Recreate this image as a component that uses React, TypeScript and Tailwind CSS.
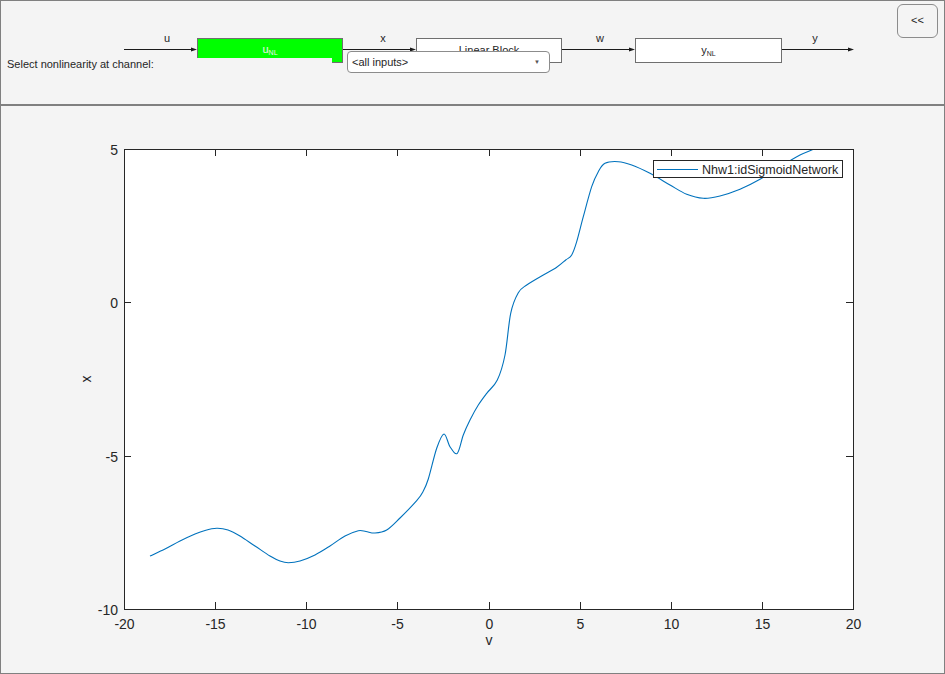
import React from 'react';

// page-coordinate samples of the nonlinearity curve (v -> x)
const curve: [number, number][] = [
    [150, 556], [165, 549], [180, 541], [195, 534], [205, 530.5], [216.7, 528.3], [228, 530],
    [240, 536], [255, 546], [270, 556], [280, 561], [288.3, 562.7], [300, 561], [315, 555],
    [330, 546], [345, 536], [358.3, 530.7], [366, 531.5], [375, 533], [386.7, 530], [400, 518],
    [416.7, 500.7], [423, 491.7], [428.3, 479], [436.7, 448.3], [444, 434], [450, 446.7],
    [457.3, 453.3], [463.3, 435], [470, 420], [478.3, 405], [486.7, 393.3], [497.3, 380],
    [505, 355], [510.7, 313.3], [518.3, 292.7], [526.7, 285], [543.3, 275], [556.7, 267.3],
    [565.7, 260], [571.7, 255], [576.7, 241.7], [583.3, 216.7], [591.7, 186.7], [598.3, 171.7],
    [605, 163.3], [618.3, 161.7], [631.7, 165], [650, 173.3], [670, 185], [686.7, 194.3],
    [703.3, 198.3], [720, 196], [740, 189.3], [760, 179.3], [780, 166.7], [800, 155],
    [813.3, 149.3], [820, 146],
];

function smoothPath(pts: [number, number][]) {
    let d = `M${pts[0][0]},${pts[0][1]}`;
    for (let i = 0; i < pts.length - 1; i++) {
        const p0 = pts[i - 1] || pts[i];
        const p1 = pts[i];
        const p2 = pts[i + 1];
        const p3 = pts[i + 2] || p2;
        const c1x = p1[0] + (p2[0] - p0[0]) / 6;
        const c1y = p1[1] + (p2[1] - p0[1]) / 6;
        const c2x = p2[0] - (p3[0] - p1[0]) / 6;
        const c2y = p2[1] - (p3[1] - p1[1]) / 6;
        d += ` C${c1x.toFixed(1)},${c1y.toFixed(1)} ${c2x.toFixed(1)},${c2y.toFixed(1)} ${p2[0]},${p2[1]}`;
    }
    return d;
}

const L = 124, R = 853, T = 149, B = 609;
const xTicks = [-20, -15, -10, -5, 0, 5, 10, 15, 20];
const yTicks = [5, 0, -5, -10];
const px = (v: number) => L + ((v + 20) / 40) * (R - L);
const py = (v: number) => T + ((5 - v) / 15) * (B - T);

function Arrow({ x1, x2, label, lx }: { x1: number; x2: number; label: string; lx: number }) {
    return (
        <g>
            <line x1={x1} y1={49.5} x2={x2 - 5} y2={49.5} stroke="#1a1a1a" strokeWidth={1} />
            <polygon points={`${x2 - 6},47.5 ${x2},49.5 ${x2 - 6},51.5`} fill="#1a1a1a" />
            <text x={lx} y={42} textAnchor="middle" fontSize={11} fill="#262626">{label}</text>
        </g>
    );
}

function Diagram() {
    return (
        <div className="relative h-[105px] shrink-0 border-b-2 border-[#808080]">
            <svg className="absolute left-0 top-0" width={943} height={103} viewBox="1 1 943 103" style={{ fontFamily: '"Liberation Sans", Arial, sans-serif' }}>
                <Arrow x1={124} x2={197} label="u" lx={167} />
                <Arrow x1={343} x2={416} label="x" lx={383} />
                <Arrow x1={562} x2={635} label="w" lx={600} />
                <Arrow x1={781} x2={854} label="y" lx={815} />
            </svg>

            {/* blocks */}
            <div className="absolute left-[196px] top-[37px] w-[146px] h-[25px] bg-[#00ff00] border border-[#6f6f6f] flex items-center justify-center pb-[2px]">
                <span className="text-[11px] text-[#f0f0f0]">u<sub className="text-[7px]">NL</sub></span>
            </div>
            <div className="absolute left-[415px] top-[37px] w-[146px] h-[25px] bg-white border border-[#6f6f6f] flex items-center justify-center">
                <span className="text-[11px] text-[#262626]">Linear Block</span>
            </div>
            <div className="absolute left-[634px] top-[37px] w-[147px] h-[25px] bg-white border border-[#6f6f6f] flex items-center justify-center">
                <span className="text-[11px] text-[#262626]">y<sub className="text-[7px]">NL</sub></span>
            </div>

            {/* channel selector */}
            <div className="absolute left-0 top-[57px] w-[331px] h-[13px] bg-[#f4f4f4] pl-[6px] text-[11px] leading-[13px] text-[#262626] whitespace-nowrap">
                Select nonlinearity at channel:
            </div>
            <div className="absolute left-[346px] top-[50px] w-[203px] h-[22px] bg-white border border-[#8c8c8c] rounded-[4px] flex items-center justify-between pl-[4px] pr-[9px]">
                <span className="text-[11px] text-[#262626]">&lt;all inputs&gt;</span>
                <span className="text-[6px] text-[#555]">▼</span>
            </div>

            <button className="absolute left-[896px] top-[3px] w-[41px] h-[34px] rounded-[6px] border border-[#8c8c8c] bg-[#f4f4f4] text-[11px] text-[#262626] flex items-center justify-center pb-[1px]">
                &lt;&lt;
            </button>
        </div>
    );
}

function Plot() {
    return (
        <div className="flex-1">
            <svg width={943} height={567} viewBox="1 106 943 567" style={{ fontFamily: '"Liberation Sans", Arial, sans-serif' }}>
                <defs>
                    <clipPath id="axclip">
                        <rect x={L} y={T} width={R - L} height={B - T} />
                    </clipPath>
                </defs>
                <rect x={L + 0.5} y={T + 0.5} width={R - L} height={B - T} fill="#ffffff" />
                <path d={smoothPath(curve)} fill="none" stroke="#0072bd" strokeWidth={1.1} clipPath="url(#axclip)" />

                {xTicks.map((v) => {
                    const x = Math.round(px(v)) + 0.5;
                    return (
                        <g key={v}>
                            <line x1={x} y1={B} x2={x} y2={B - 7} stroke="#262626" />
                            <line x1={x} y1={T} x2={x} y2={T + 7} stroke="#262626" />
                            <text x={x} y={629} textAnchor="middle" fontSize={14} fill="#262626">{v}</text>
                        </g>
                    );
                })}
                {yTicks.map((v) => {
                    const y = Math.round(py(v)) + 0.5;
                    return (
                        <g key={v}>
                            <line x1={L} y1={y} x2={L + 7} y2={y} stroke="#262626" />
                            <line x1={R} y1={y} x2={R - 7} y2={y} stroke="#262626" />
                            <text x={118} y={y + 5} textAnchor="end" fontSize={14} fill="#262626">{v}</text>
                        </g>
                    );
                })}
                <rect x={L + 0.5} y={T + 0.5} width={R - L} height={B - T} fill="none" stroke="#262626" />

                <text x={489} y={645} textAnchor="middle" fontSize={14} fill="#262626">v</text>
                <text x={91} y={379} textAnchor="middle" fontSize={14} fill="#262626" transform="rotate(-90 91 379)">x</text>

                {/* legend */}
                <rect x={653.5} y={160.5} width={189} height={17} fill="#ffffff" stroke="#262626" />
                <line x1={657} y1={169.5} x2={698} y2={169.5} stroke="#0072bd" strokeWidth={1.1} />
                <text x={702} y={174} fontSize={12.5} fill="#262626">Nhw1:idSigmoidNetwork</text>
            </svg>
        </div>
    );
}

export default function App() {
    return (
        <div className="w-[945px] h-[674px] border border-[#808080] bg-[#f4f4f4] flex flex-col overflow-hidden font-['Liberation_Sans',Arial,sans-serif]">
            <Diagram />
            <Plot />
        </div>
    );
}
